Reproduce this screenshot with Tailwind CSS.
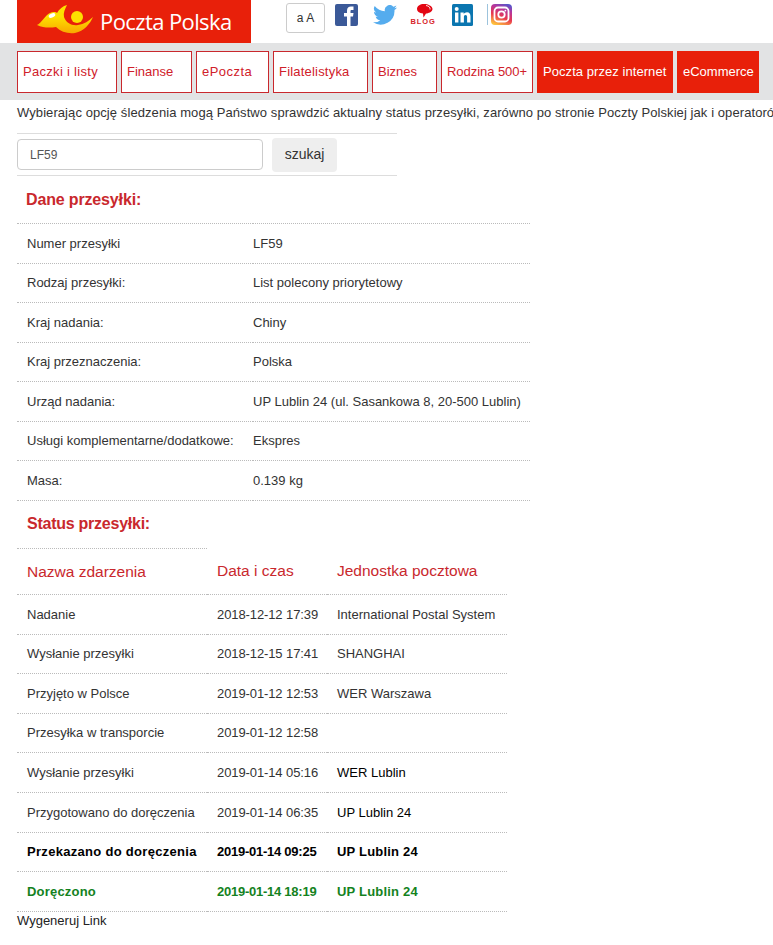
<!DOCTYPE html>
<html lang="pl">

<head>
    <meta charset="UTF-8">
    <title>Poczta Polska</title>
    <script src="https://cdn.jsdelivr.net/npm/@tailwindcss/browser@4"></script>
</head>

<body class="bg-white overflow-hidden font-['Liberation_Sans',Arial,sans-serif] text-[#333] text-[13px]">
    <div class="w-[773px] h-[945px] overflow-hidden">
        <!-- top -->
        <div class="flex h-[43px] pl-[17px]">
            <div class="w-[234px] h-[43px] bg-[#e8200a] flex items-start text-white">
                <svg class="ml-[19px] mt-[3px]" width="58" height="32" viewBox="36 3 58 32">
                    <defs>
                        <linearGradient id="horn" x1="0" y1="0" x2="0" y2="1">
                            <stop offset="0.400" stop-color="#fde100" />
                            <stop offset="1" stop-color="#f9a800" />
                        </linearGradient>
                    </defs>
                    <path d="M37 25C42 23 45 15 50 13C53 11.500 56 12 57 13C59 9 63 6 67 5C65 9 63 13 64 17C66 23 72 26 78 25C84 24 89 21 93 17C90 24 84 31 75 33C68 34 61 32 56 27C50 28 43 28 37 25Z" fill="url(#horn)" />
                    <ellipse cx="52" cy="15.500" rx="3.500" ry="2" transform="rotate(-25 52 15.500)" fill="#fff" />
                    <circle cx="77" cy="17" r="6" fill="#fde100" />
                </svg>
                <span class="ml-[6px] mt-[8px] text-[22px] leading-[26px] font-['Open_Sans',sans-serif] tracking-[-0.6px] whitespace-nowrap">Poczta Polska</span>
            </div>
            <button class="ml-[35px] mt-[3px] w-[39px] h-[30px] border border-[#ccc] rounded-[3px] text-[12px] text-[#333] bg-white">a A</button>
            <!-- social -->
            <svg class="ml-[10px] mt-[4px]" width="23" height="22" viewBox="0 0 23 22">
                <rect width="23" height="22" rx="2" fill="#3b5998" />
                <path d="M12 22V12.500H9V9H12V6.500C12 3.800 13.600 2.500 16 2.500H18.500V6H16.800C15.700 6 15.500 6.500 15.500 7.400V9H18.500L18 12.500H15.500V22Z" fill="#fff" />
            </svg>
            <svg class="ml-[15px] mt-[5px]" width="24" height="20" viewBox="0 0 24 20">
                <path d="M24 2.400c-.9.4-1.800.7-2.800.8 1-.6 1.800-1.600 2.200-2.700-1 .6-2 1-3.100 1.200A4.900 4.900 0 0 0 11.900 6.200 13.900 13.900 0 0 1 1.700.900a4.900 4.900 0 0 0 1.500 6.500c-.8 0-1.600-.2-2.200-.6 0 2.400 1.700 4.400 3.900 4.900-.7.200-1.500.2-2.200.1.600 2 2.400 3.400 4.600 3.400A9.900 9.900 0 0 1 0 17.300 13.900 13.900 0 0 0 21.500 5c1-.7 1.800-1.600 2.500-2.600z" fill="#55acee" />
            </svg>
            <div class="ml-[14px] mt-[4px] w-[24px] h-[22px] flex flex-col items-center">
                <svg class="ml-[2px]" width="17" height="14" viewBox="0 0 17 14">
                    <path d="M8 0C12 0 16.500 2 16.500 5C16.500 8 12 9.500 10 9.500L7.500 13.500L7 9.400C3 9 1 7.500 1 5C1 2 4 0 8 0Z" fill="#e30613" />
                    <path d="M10 1.500C13 2 14.500 3.500 14 5.500" stroke="#fff" stroke-width=".9" fill="none" />
                </svg>
                <span class="text-[#d8232a] text-[7.500px] leading-[8px] font-bold tracking-[.9px] whitespace-nowrap">BLOG</span>
            </div>
            <svg class="ml-[17px] mt-[4px]" width="21" height="22" viewBox="0 0 21 22">
                <rect width="21" height="22" rx="1.500" fill="#0b76b0" />
                <rect x="3" y="8.500" width="3.400" height="10" fill="#fff" />
                <circle cx="4.700" cy="5" r="2" fill="#fff" />
                <path d="M8.500 8.500H11.700V10C12.400 8.900 13.600 8.200 15 8.200C17.500 8.200 18.500 9.800 18.500 12.500V18.500H15.100V13.100C15.100 11.800 14.600 11.100 13.500 11.100C12.400 11.100 11.900 11.900 11.900 13.100V18.500H8.500Z" fill="#fff" />
            </svg>
            <div class="ml-[14px] mt-[4px] w-px h-[21px] bg-[#9cc3dc]"></div>
            <svg class="ml-[3px] mt-[4px]" width="21" height="21" viewBox="0 0 21 21">
                <defs>
                    <linearGradient id="ig" x1="0.300" y1="1" x2="0.700" y2="0">
                        <stop offset="0" stop-color="#fdc03c" />
                        <stop offset=".4" stop-color="#e8384f" />
                        <stop offset=".75" stop-color="#b5359d" />
                        <stop offset="1" stop-color="#5b55c9" />
                    </linearGradient>
                </defs>
                <rect width="21" height="21" rx="4" fill="url(#ig)" />
                <rect x="3.500" y="3.500" width="14" height="14" rx="3.500" fill="none" stroke="#fff" stroke-width="1.800" />
                <circle cx="10.500" cy="10.500" r="3.200" fill="none" stroke="#fff" stroke-width="1.800" />
                <circle cx="14.400" cy="6.600" r=".9" fill="#fff" />
            </svg>
        </div>

        <!-- menu -->
        <nav class="h-[57px] bg-[#e2e3e4] pl-[17px] pt-[8px] flex gap-[4px] text-[13px] whitespace-nowrap">
            <a class="w-[100px] h-[42px] pl-[5px] flex items-center bg-white border border-[#c9282d] text-[#d0202a] tracking-[.3px]">Paczki i listy</a>
            <a class="w-[71px] h-[42px] pl-[5px] flex items-center bg-white border border-[#c9282d] text-[#d0202a]">Finanse</a>
            <a class="w-[73px] h-[42px] pl-[5px] flex items-center bg-white border border-[#c9282d] text-[#d0202a] tracking-[.45px]">ePoczta</a>
            <a class="w-[95px] h-[42px] pl-[5px] flex items-center bg-white border border-[#c9282d] text-[#d0202a] tracking-[.2px]">Filatelistyka</a>
            <a class="w-[65px] h-[42px] pl-[5px] flex items-center bg-white border border-[#c9282d] text-[#d0202a]">Biznes</a>
            <a class="w-[92px] h-[42px] pl-[5px] flex items-center bg-white border border-[#c9282d] text-[#d0202a] tracking-[-.05px]">Rodzina 500+</a>
            <a class="w-[136px] h-[42px] pl-[6px] flex items-center bg-[#e8200a] text-white tracking-[.06px]">Poczta przez internet</a>
            <a class="w-[82px] h-[42px] pl-[6px] flex items-center bg-[#e8200a] text-white">eCommerce</a>
        </nav>

        <div class="pl-[17px]">
            <p class="h-[33px] leading-[26px] text-[13px] tracking-[.08px] whitespace-nowrap">Wybierając opcję śledzenia mogą Państwo sprawdzić aktualny status przesyłki, zarówno po stronie Poczty Polskiej jak i operatorów zagranicznych.</p>

            <form class="w-[380px] h-[43px] border-y border-[#ddd] flex items-center gap-[9px]">
                <input type="text" value="LF59" class="w-[246px] h-[31px] px-[12px] border border-[#ccc] rounded-[4px] text-[12px] text-[#555] outline-none">
                <button type="button" class="w-[65px] h-[34px] bg-[#eee] rounded-[4px] text-[14px] text-[#333]">szukaj</button>
            </form>

            <h2 class="h-[47px] pl-[9px] leading-[48px] text-[16px] font-bold text-[#c9282d] tracking-[-.15px]">Dane przesyłki:</h2>

            <table class="w-[513px] table-fixed border-collapse">
                <colgroup>
                    <col class="w-[236px]">
                    <col>
                </colgroup>
                <tbody>
                    <tr class="h-[39.500px] border-y border-dotted border-[#bbb]">
                        <td class="pl-[10px]">Numer przesyłki</td>
                        <td>LF59</td>
                    </tr>
                    <tr class="h-[39.500px] border-y border-dotted border-[#bbb]">
                        <td class="pl-[10px]">Rodzaj przesyłki:</td>
                        <td>List polecony priorytetowy</td>
                    </tr>
                    <tr class="h-[39.500px] border-y border-dotted border-[#bbb]">
                        <td class="pl-[10px]">Kraj nadania:</td>
                        <td>Chiny</td>
                    </tr>
                    <tr class="h-[39.500px] border-y border-dotted border-[#bbb]">
                        <td class="pl-[10px]">Kraj przeznaczenia:</td>
                        <td>Polska</td>
                    </tr>
                    <tr class="h-[39.500px] border-y border-dotted border-[#bbb]">
                        <td class="pl-[10px]">Urząd nadania:</td>
                        <td class="whitespace-nowrap">UP Lublin 24 (ul. Sasankowa 8, 20-500 Lublin)</td>
                    </tr>
                    <tr class="h-[39.500px] border-y border-dotted border-[#bbb]">
                        <td class="pl-[10px] whitespace-nowrap">Usługi komplementarne/dodatkowe:</td>
                        <td>Ekspres</td>
                    </tr>
                    <tr class="h-[39.500px] border-y border-dotted border-[#bbb]">
                        <td class="pl-[10px]">Masa:</td>
                        <td>0.139 kg</td>
                    </tr>
                </tbody>
            </table>

            <h2 class="h-[47px] pl-[10px] leading-[46px] text-[16px] font-bold text-[#c9282d] tracking-[-.25px]">Status przesyłki:</h2>

            <table class="w-[490px] table-fixed border-collapse">
                <colgroup>
                    <col class="w-[190px]">
                    <col class="w-[120px]">
                    <col>
                </colgroup>
                <thead>
                    <tr class="h-[46.500px] text-[15.500px] text-[#c9282d] border-b border-dotted border-[#bbb]">
                        <th class="pl-[10px] font-normal text-left border-t border-dotted border-[#bbb] whitespace-nowrap">Nazwa zdarzenia</th>
                        <th class="pl-[10px] font-normal text-left whitespace-nowrap">Data i czas</th>
                        <th class="pl-[10px] font-normal text-left whitespace-nowrap">Jednostka pocztowa</th>
                    </tr>
                </thead>
                <tbody>
                    <tr class="h-[39.600px] border-b border-dotted border-[#bbb]">
                        <td class="pl-[10px]">Nadanie</td>
                        <td class="pl-[10px] tracking-[-.1px]">2018-12-12 17:39</td>
                        <td class="pl-[10px] whitespace-nowrap">International Postal System</td>
                    </tr>
                    <tr class="h-[39.600px] border-b border-dotted border-[#bbb]">
                        <td class="pl-[10px]">Wysłanie przesyłki</td>
                        <td class="pl-[10px] tracking-[-.1px]">2018-12-15 17:41</td>
                        <td class="pl-[10px]">SHANGHAI</td>
                    </tr>
                    <tr class="h-[39.600px] border-b border-dotted border-[#bbb]">
                        <td class="pl-[10px]">Przyjęto w Polsce</td>
                        <td class="pl-[10px] tracking-[-.1px]">2019-01-12 12:53</td>
                        <td class="pl-[10px]">WER Warszawa</td>
                    </tr>
                    <tr class="h-[39.600px] border-b border-dotted border-[#bbb]">
                        <td class="pl-[10px]">Przesyłka w transporcie</td>
                        <td class="pl-[10px] tracking-[-.1px]">2019-01-12 12:58</td>
                        <td class="pl-[10px]"></td>
                    </tr>
                    <tr class="h-[39.600px] border-b border-dotted border-[#bbb]">
                        <td class="pl-[10px]">Wysłanie przesyłki</td>
                        <td class="pl-[10px] tracking-[-.1px]">2019-01-14 05:16</td>
                        <td class="pl-[10px] text-black">WER Lublin</td>
                    </tr>
                    <tr class="h-[39.600px] border-b border-dotted border-[#bbb]">
                        <td class="pl-[10px] whitespace-nowrap">Przygotowano do doręczenia</td>
                        <td class="pl-[10px] tracking-[-.1px]">2019-01-14 06:35</td>
                        <td class="pl-[10px] text-black">UP Lublin 24</td>
                    </tr>
                    <tr class="h-[39.600px] border-b border-dotted border-[#bbb] font-bold text-black">
                        <td class="pl-[10px] whitespace-nowrap tracking-[.3px]">Przekazano do doręczenia</td>
                        <td class="pl-[10px] tracking-[-.25px] whitespace-nowrap">2019-01-14 09:25</td>
                        <td class="pl-[10px] tracking-[.2px]">UP Lublin 24</td>
                    </tr>
                    <tr class="h-[39.600px] border-b border-dotted border-[#bbb] font-bold text-[#14821e]">
                        <td class="pl-[10px] tracking-[.2px]">Doręczono</td>
                        <td class="pl-[10px] tracking-[-.25px] whitespace-nowrap">2019-01-14 18:19</td>
                        <td class="pl-[10px] tracking-[.2px]">UP Lublin 24</td>
                    </tr>
                </tbody>
            </table>

            <a class="block text-[13px] leading-[18px] text-[#222]">Wygeneruj Link</a>
        </div>
    </div>
</body>

</html>
